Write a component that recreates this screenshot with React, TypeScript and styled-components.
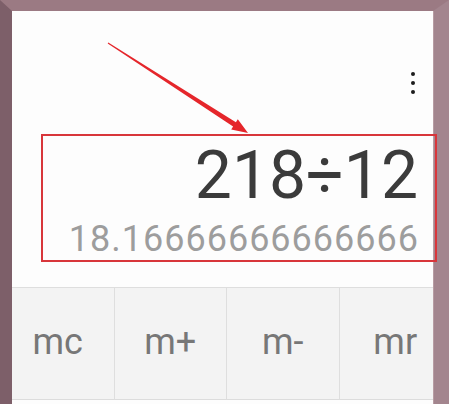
import React from 'react';
import styled, { createGlobalStyle } from 'styled-components';

const GlobalStyle = createGlobalStyle`
  html, body {
    margin: 0;
    padding: 0;
    background: #9c7b84;
    font-family: Roboto, "Liberation Sans", Arial, sans-serif;
  }
`;

const Stage = styled.div`
  position: relative;
  width: 449px;
  height: 404px;
  overflow: hidden;
`;

// the photo frame around the phone screen, mitred borders give the bevel corners
const Frame = styled.div`
  box-sizing: border-box;
  width: 100%;
  height: 100%;
  border-left: 12px solid #7d5f69;
  border-top: 11px solid #9b7a83;
  border-right: 16px solid #a3858e;
`;

const Screen = styled.div`
  height: 100%;
  background: #fdfdfd;
  overflow: hidden;
  display: flex;
  flex-direction: column;
  box-shadow: 1px 0 0 #b79ca3;
`;

const TopBar = styled.div`
  height: 104px;
  box-sizing: border-box;
  display: flex;
  justify-content: flex-end;
  align-items: flex-start;
  padding: 61px 18px 0 0;
`;

const MoreButton = styled.div`
  display: flex;
  flex-direction: column;
  gap: 5px;
`;

const Dot = styled.span`
  width: 4px;
  height: 4px;
  border-radius: 50%;
  background: #1c1c1c;
`;

const Display = styled.div`
  display: flex;
  flex-direction: column;
  align-items: flex-end;
  gap: 12px;
  padding: 28px 15px 30px 0;
`;

const Expression = styled.div`
  font-size: 66px;
  line-height: 66px;
  color: #3b3b3b;
`;

const Result = styled.div`
  font-size: 36px;
  line-height: 36px;
  letter-spacing: 1px;
  margin-right: -1px;
  color: #9d9d9d;
`;

const Keypad = styled.div`
  display: grid;
  grid-template-columns: repeat(4, 112.5px);
  margin-left: -10px;
  border-top: 1px solid #dedede;
`;

const Key = styled.button`
  height: 112px;
  border: none;
  border-right: 1px solid #dedede;
  border-bottom: 1px solid #dcdcdc;
  background: #f3f3f3;
  color: #777777;
  font-family: Roboto, "Liberation Sans", Arial, sans-serif;
  font-size: 36px;
  padding: 0 0 4px 0;
  cursor: pointer;
`;

const Annotation = styled.svg`
  position: absolute;
  left: 0;
  top: 0;
  pointer-events: none;
`;

const memoryKeys = ['mc', 'm+', 'm-', 'mr'];

const App: React.FC = () => {
  return (
    <Stage>
      <GlobalStyle />
      <Frame>
        <Screen>
          <TopBar>
            <MoreButton>
              <Dot />
              <Dot />
              <Dot />
            </MoreButton>
          </TopBar>
          <Display>
            <Expression>218÷12</Expression>
            <Result>18.16666666666666</Result>
          </Display>
          <Keypad>
            {memoryKeys.map(k => (
              <Key key={k}>{k}</Key>
            ))}
          </Keypad>
        </Screen>
      </Frame>

      {/* red markup drawn over the screenshot */}
      <Annotation width="449" height="404" viewBox="0 0 449 404">
        <polygon
          points="108.3,42.6 235.9,122.2 237.8,119.2 248,133 231.2,129.4 233.1,126.4 107.7,43.4"
          fill="#e5262b"
        />
        <rect x="42" y="135" width="394" height="126" fill="none" stroke="#d8363b" strokeWidth="2" />
      </Annotation>
    </Stage>
  );
};

export default App;
